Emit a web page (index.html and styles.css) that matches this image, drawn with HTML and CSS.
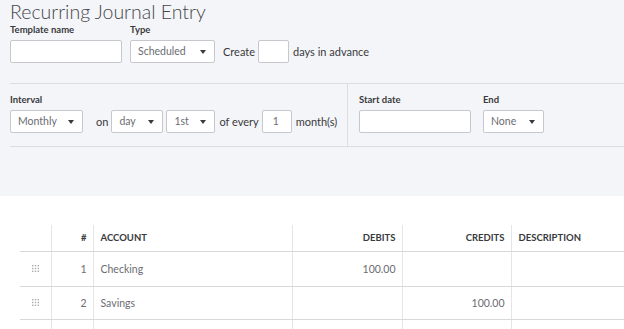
FILE: index.html
```html
<!DOCTYPE html>
<html lang="en">
<head>
    <meta charset="UTF-8">
    <title>Recurring Journal Entry</title>
    <link rel="stylesheet" href="styles.css">
</head>
<body>
    <div class="top">
        <h1 class="title">Recurring Journal Entry</h1>

        <div class="row">
            <div class="field">
                <label class="field-label">Template name</label>
                <div class="input input-name"></div>
            </div>
            <div class="field">
                <label class="field-label">Type</label>
                <div class="select select-type">Scheduled <span class="caret"></span></div>
            </div>
            <span class="inline-text">Create</span>
            <div class="input input-days"></div>
            <span class="inline-text">days in advance</span>
        </div>

        <div class="schedule">
            <div class="interval">
                <div class="field">
                    <label class="field-label">Interval</label>
                    <div class="row-inline">
                        <div class="select select-monthly">Monthly <span class="caret"></span></div>
                        <span class="inline-text on">on</span>
                        <div class="select select-day">day <span class="caret"></span></div>
                        <div class="select select-nth">1st <span class="caret"></span></div>
                        <span class="inline-text">of every</span>
                        <div class="input input-every">1</div>
                        <span class="inline-text">month(s)</span>
                    </div>
                </div>
            </div>
            <div class="dates">
                <div class="field">
                    <label class="field-label">Start date</label>
                    <div class="input input-start"></div>
                </div>
                <div class="field">
                    <label class="field-label">End</label>
                    <div class="select select-end">None <span class="caret"></span></div>
                </div>
            </div>
        </div>
    </div>

    <div class="lines">
        <table class="grid">
            <colgroup>
                <col class="w-drag">
                <col class="w-num">
                <col class="w-account">
                <col class="w-debit">
                <col class="w-credit">
                <col>
            </colgroup>
            <thead>
                <tr>
                    <th></th>
                    <th class="num">#</th>
                    <th class="text">Account</th>
                    <th class="num">Debits</th>
                    <th class="num">Credits</th>
                    <th class="text">Description</th>
                </tr>
            </thead>
            <tbody>
                <tr class="first">
                    <td class="drag"><svg class="handle" width="7" height="7" viewBox="0 0 7 7"><g fill="#a9abb0"><rect x="0" y="0" width="1.4" height="1.4"/><rect x="2.8" y="0" width="1.4" height="1.4"/><rect x="5.6" y="0" width="1.4" height="1.4"/><rect x="0" y="2.8" width="1.4" height="1.4"/><rect x="2.8" y="2.8" width="1.4" height="1.4"/><rect x="5.6" y="2.8" width="1.4" height="1.4"/><rect x="0" y="5.6" width="1.4" height="1.4"/><rect x="2.8" y="5.6" width="1.4" height="1.4"/><rect x="5.6" y="5.6" width="1.4" height="1.4"/></g></svg></td>
                    <td class="num">1</td>
                    <td class="text">Checking</td>
                    <td class="num">100.00</td>
                    <td class="num"></td>
                    <td class="text"></td>
                </tr>
                <tr>
                    <td class="drag"><svg class="handle" width="7" height="7" viewBox="0 0 7 7"><g fill="#a9abb0"><rect x="0" y="0" width="1.4" height="1.4"/><rect x="2.8" y="0" width="1.4" height="1.4"/><rect x="5.6" y="0" width="1.4" height="1.4"/><rect x="0" y="2.8" width="1.4" height="1.4"/><rect x="2.8" y="2.8" width="1.4" height="1.4"/><rect x="5.6" y="2.8" width="1.4" height="1.4"/><rect x="0" y="5.6" width="1.4" height="1.4"/><rect x="2.8" y="5.6" width="1.4" height="1.4"/><rect x="5.6" y="5.6" width="1.4" height="1.4"/></g></svg></td>
                    <td class="num">2</td>
                    <td class="text">Savings</td>
                    <td class="num"></td>
                    <td class="num">100.00</td>
                    <td class="text"></td>
                </tr>
                <tr class="cut">
                    <td></td>
                    <td></td>
                    <td></td>
                    <td></td>
                    <td></td>
                    <td></td>
                </tr>
            </tbody>
        </table>
    </div>
</body>
</html>
```

FILE: styles.css
```css
body {
    margin: 0;
    font-family: Lato, 'Open Sans', sans-serif;
    color: #393a3d;
    background: #fff;
    overflow: hidden;
}

.top {
    background: #f4f5f8;
    height: 196px;
    padding-left: 10px;
    box-sizing: border-box;
}

.title {
    margin: 0;
    font-size: 19.5px;
    font-weight: 300;
    line-height: 23px;
    color: #45464b;
}

.row {
    display: flex;
    align-items: flex-end;
    margin-top: 1px;
}

.field {
    display: flex;
    flex-direction: column;
    margin-right: 8px;
}

.field-label {
    font-size: 9.5px;
    font-weight: 700;
    line-height: 12px;
    margin-bottom: 4px;
}

.input,
.select {
    height: 23px;
    box-sizing: border-box;
    background: #fff;
    border: 1px solid #c6c8cd;
    border-radius: 2px;
    font-size: 10.5px;
    line-height: 21px;
    color: #6b6c72;
    flex-shrink: 0;
}

.select {
    display: flex;
    justify-content: space-between;
    align-items: center;
    padding: 0 8px 0 7px;
}

.caret {
    width: 0;
    height: 0;
    border-left: 3.5px solid transparent;
    border-right: 3.5px solid transparent;
    border-top: 4px solid #393a3d;
}

.inline-text {
    font-size: 11px;
    line-height: 23px;
    margin-right: 3px;
    height: 23px;
    white-space: nowrap;
    flex-shrink: 0;
}

.input-name { width: 112px; }
.select-type { width: 85px; }
.input-days { width: 31px; margin-right: 4px; }

.schedule {
    display: flex;
    margin-top: 20px;
    border-top: 1px solid #dcdde1;
    border-bottom: 1px solid #dcdde1;
    height: 64px;
    box-sizing: border-box;
}

.interval {
    width: 337px;
    flex-shrink: 0;
    border-right: 1px solid #dcdde1;
    padding-top: 10px;
}

.row-inline {
    display: flex;
    align-items: center;
}

.select-monthly { width: 73px; }
.on { margin: 0 3px 0 13px; }
.select-day { width: 52px; margin-right: 3px; }
.select-nth { width: 49px; margin-right: 4px; }
.input-every { width: 30px; padding-left: 10px; margin-right: 4px; }

.dates {
    display: flex;
    padding: 10px 0 0 11px;
}

.dates .field { margin-right: 12px; }
.input-start { width: 112px; }
.select-end { width: 61px; }

.lines {
    height: 133px;
    overflow: hidden;
    padding: 29px 0 0 20px;
    box-sizing: border-box;
}

.grid {
    border-collapse: collapse;
    table-layout: fixed;
    width: 604px;
}

.w-drag { width: 31px; }
.w-num { width: 42px; }
.w-account { width: 199px; }
.w-debit { width: 110px; }
.w-credit { width: 109px; }

.grid th,
.grid td {
    box-sizing: border-box;
    border-bottom: 1px solid #d6d8dc;
    border-left: 1px solid #e4e5e8;
    padding: 0 6px;
    white-space: nowrap;
}

.grid th:first-child,
.grid td:first-child {
    border-left: none;
}

.grid th {
    height: 26px;
    font-size: 9.5px;
    font-weight: 700;
    text-transform: uppercase;
    text-align: left;
    color: #393a3d;
}

.grid td {
    height: 33px;
    font-size: 10.5px;
    color: #6b6c72;
}

.grid .first td {
    height: 35px;
}

.grid .num {
    text-align: right;
}

.grid .text {
    padding-left: 7px;
}

.grid .drag {
    text-align: center;
    line-height: 0;
}

.handle {
    display: inline-block;
}

.grid .cut td {
    border-bottom: none;
}
```
